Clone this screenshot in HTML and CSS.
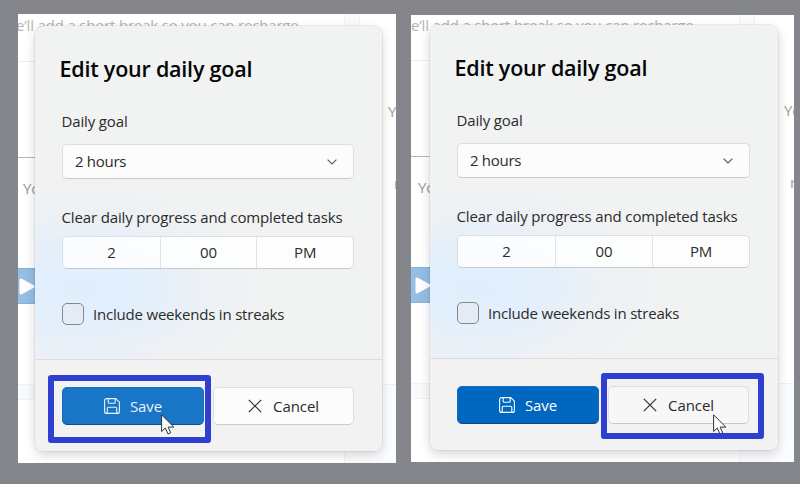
FILE: index.html
```html
<!DOCTYPE html>
<html lang="en">
<head>
<meta charset="utf-8">
<title>Edit your daily goal</title>
<link rel="stylesheet" href="styles.css">
</head>
<body>
<svg class="defs" width="0" height="0">
  <symbol id="save" viewBox="0 0 16 16"><g fill="none" stroke="currentColor" stroke-width="1.1" stroke-linejoin="round"><path d="M2.6.6h9.2l3.6 3.5v9.3a2 2 0 0 1-2 2H2.6a2 2 0 0 1-2-2V2.6a2 2 0 0 1 2-2z"/><path d="M4.2.6v3.6a1 1 0 0 0 1 1h5a1 1 0 0 0 1-1V.6M3.2 15.4v-5a1.2 1.2 0 0 1 1.2-1.2h7.2a1.2 1.2 0 0 1 1.2 1.2v5"/></g></symbol>
  <symbol id="close" viewBox="0 0 14 14"><path d="M.8.8l12.4 12.4M13.2.8L.8 13.2" fill="none" stroke="currentColor" stroke-width="1.15"/></symbol>
  <symbol id="chevron" viewBox="0 0 10 6"><path d="M.6.6L5 5 9.400.6" fill="none" stroke="currentColor" stroke-width="1.1"/></symbol>
  <symbol id="pointer" viewBox="0 0 14 21"><path d="M.6.8v16.700l3.700-3.500 2.700 6 2.700-1.200-2.600-5.700h5.700z" fill="#fff" stroke="#30323c" stroke-width="1" stroke-linejoin="round"/></symbol>
  <symbol id="play" viewBox="0 0 16 17"><path d="M2 2v13l12-6.500z" fill="#fff" stroke="#fff" stroke-width="3" stroke-linejoin="round"/></symbol>
</svg>
<main class="stage">
  <section class="panel panel-a">
    <div class="back">
      <p class="hint">e’ll add a short break so you can recharge.</p>
      <i class="gutter"></i><i class="line line-top"></i><i class="line line-mid"></i><i class="band"></i><i class="corner"></i>
      <span class="cut cut-left">Yo</span><span class="cut cut-right">Ye</span><span class="cut cut-low">r</span>
      <div class="play"><svg width="16" height="17"><use href="#play"/></svg></div>
    </div>
    <div class="dialog">
      <div class="body">
        <h1>Edit your daily goal</h1>
        <div class="label goal">Daily goal</div>
        <div class="select"><span>2 hours</span><svg width="10" height="6"><use href="#chevron"/></svg></div>
        <div class="label clear">Clear daily progress and completed tasks</div>
        <div class="time"><span>2</span><span>00</span><span>PM</span></div>
        <div class="check"><i></i><span>Include weekends in streaks</span></div>
      </div>
      <div class="footer">
        <div class="btn primary hover"><svg width="16" height="16"><use href="#save"/></svg><span>Save</span></div>
        <div class="btn"><svg width="14" height="14"><use href="#close"/></svg><span>Cancel</span></div>
      </div>
    </div>
    <svg class="pointer" width="14" height="21"><use href="#pointer"/></svg>
    <div class="mark"></div>
  </section>
  <section class="panel panel-b">
    <div class="back">
      <p class="hint">e’ll add a short break so you can recharge.</p>
      <i class="gutter"></i><i class="line line-top"></i><i class="line line-mid"></i><i class="band"></i><i class="corner"></i>
      <span class="cut cut-left">Yo</span><span class="cut cut-right">Ye</span><span class="cut cut-low">r</span>
      <div class="play"><svg width="16" height="17"><use href="#play"/></svg></div>
    </div>
    <div class="dialog">
      <div class="body">
        <h1>Edit your daily goal</h1>
        <div class="label goal">Daily goal</div>
        <div class="select"><span>2 hours</span><svg width="10" height="6"><use href="#chevron"/></svg></div>
        <div class="label clear">Clear daily progress and completed tasks</div>
        <div class="time"><span>2</span><span>00</span><span>PM</span></div>
        <div class="check"><i></i><span>Include weekends in streaks</span></div>
      </div>
      <div class="footer">
        <div class="btn primary"><svg width="16" height="16"><use href="#save"/></svg><span>Save</span></div>
        <div class="btn hover"><svg width="14" height="14"><use href="#close"/></svg><span>Cancel</span></div>
      </div>
    </div>
    <svg class="pointer" width="14" height="21"><use href="#pointer"/></svg>
    <div class="mark"></div>
  </section>
</main>
</body>
</html>
```
FILE: styles.css
```css
* { box-sizing: border-box; }
body {
  margin: 0;
  background: #85868b;
  font-family: "Open Sans", "Noto Sans", sans-serif;
  font-size: 15px;
  letter-spacing: -0.2px;
  color: #2b2b2b;
}
.defs { position: absolute; }
svg { display: block; flex: none; }
.stage {
  display: flex;
  align-items: flex-start;
  gap: 15px;
  width: 800px;
  height: 484px;
  padding: 14px 0 0 18px;
  overflow: hidden;
}
.panel { position: relative; background: #fff; }
.panel-a { width: 378px; height: 449px; padding: 12px 0 0 17px; --shift: 0px; --right: 370px; }
.panel-b { width: 383px; height: 447px; margin-top: 1px; padding: 10px 0 0 19px; --shift: 2px; --right: 373px; }

/* Page behind the dialog */
.back { position: absolute; inset: 0; overflow: hidden; color: #9b9b9b; }
.back > * { position: absolute; }
.hint { margin: 0; left: calc(var(--shift) - 2px); top: 0; line-height: 22px; white-space: nowrap; color: #b4b4b4; letter-spacing: -.18px; }
.panel-b .hint { top: -1px; }
.gutter { left: calc(326px + var(--shift)); top: 0; width: 16px; height: 30px; background: #fafbfd; border: solid #f2f3f5; border-width: 0 1px; }
.line { left: 0; width: 30px; height: 1px; }
.line-top { top: 47px; background: #ededed; }
.line-mid { top: 143px; background: #b5b5b5; }
.panel-b .line-top { top: 45px; }
.panel-b .line-mid { top: 141px; }
.band { left: 0; top: 370px; width: 30px; height: 16px; background: #f9fafc; border: solid #f0f2f5; border-width: 1px 0; }
.corner { left: calc(326px + var(--shift)); top: 370px; right: 0; bottom: 0; background: #fbfcfd; border: solid #f0f1f3; border-width: 1px 0 0 1px; }
.panel-b .band, .panel-b .corner { top: 368px; }
.cut { line-height: 20px; }
.cut-left { left: calc(5px + var(--shift)); top: 164px; }
.cut-right { left: var(--right); top: 87px; }
.cut-low { left: calc(var(--right) + 6px); top: 159px; }
.panel-b .cut { margin-top: -2px; }
.play { left: 0; top: 254px; width: 30px; height: 36px; background: #95bee4; padding: 9px 0 0 1px; border: solid #85b1da; border-width: 1px 0; }
.panel-b .play { top: 252px; padding-left: 4px; }

.dialog {
  position: relative;
  width: 348px;
  height: 425px;
  border-radius: 8px;
  background:
    radial-gradient(ellipse 195px 110px at 45px 262px, #e0eefd 0, #e3effb 35%, rgba(234, 240, 246, .65) 65%, rgba(241, 241, 241, 0) 100%),
    #f1f2f2;
  box-shadow: 0 0 0 1px rgba(0, 0, 0, .05), 0 4px 11px rgba(0, 0, 0, .16);
}
.panel-a .dialog { width: 347px; }
.body { height: 334px; padding: 0 28px 0 27px; border-bottom: 1px solid #dcdddf; }
h1 {
  margin: 0 0 0 -2.500px;
  padding-top: 28px;
  font-size: 21.5px;
  line-height: 30px;
  font-weight: 600;
  letter-spacing: -.22px;
  color: #050505;
  white-space: nowrap;
}
.label { line-height: 20px; white-space: nowrap; letter-spacing: -.14px; }
.goal { margin-top: 27px; }
.goal, .clear { text-indent: -.5px; }
.select, .time, .btn { background: #fcfcfc; border: 1px solid #dedede; border-bottom-color: #c9c9c9; border-radius: 5px; }
.select { display: flex; align-items: center; justify-content: space-between; height: 35px; margin-top: 13px; padding: 0 16px 0 12px; letter-spacing: -.3px; }
.select span { padding-bottom: 2px; }
.select svg { color: #555; }
.clear { margin-top: 28px; }
.time { display: grid; grid-template-columns: repeat(3, 1fr); height: 33px; margin-top: 9px; line-height: 31px; text-align: center; background: rgba(255, 255, 255, .82); }
.time span + span { border-left: 1px solid #e2e3e5; }
.check { display: flex; align-items: center; gap: 9px; height: 22px; margin-top: 34px; }
.check span { padding-bottom: 1px; }
.check i { width: 22px; height: 22px; border: 1px solid #858789; border-radius: 5px; background: rgba(230, 232, 235, .5); }
.footer { display: grid; grid-template-columns: 142px 141px; column-gap: 9px; padding: 27px 0 0 27px; background: #f2f2f2; height: 91px; border-radius: 0 0 8px 8px; }
.btn { display: flex; align-items: center; justify-content: center; height: 38px; gap: 11px; letter-spacing: -.1px; }
.btn span { padding-bottom: 1px; }
.btn.primary { gap: 10px; }
.btn.hover { background: #f7f7f7; }
.btn.primary { background: #0067c0; color: #fff; border-color: #1872c4 #0f6cbf #09498a; }
.btn.primary.hover { background: #1975c5; color: #e9f2fa; border-bottom-color: #0d4e8a; }

/* Callout frame and mouse pointer */
.mark { position: absolute; border: 6px solid #2f3fd0; border-radius: 3px; }
.pointer { position: absolute; }
.panel-a .mark { left: 30px; top: 361px; width: 163px; height: 68px; }
.panel-b .mark { left: 190px; top: 358px; width: 163px; height: 66px; }
.panel-a .pointer { left: 143px; top: 400px; }
.panel-b .pointer { left: 302px; top: 399px; }
```
